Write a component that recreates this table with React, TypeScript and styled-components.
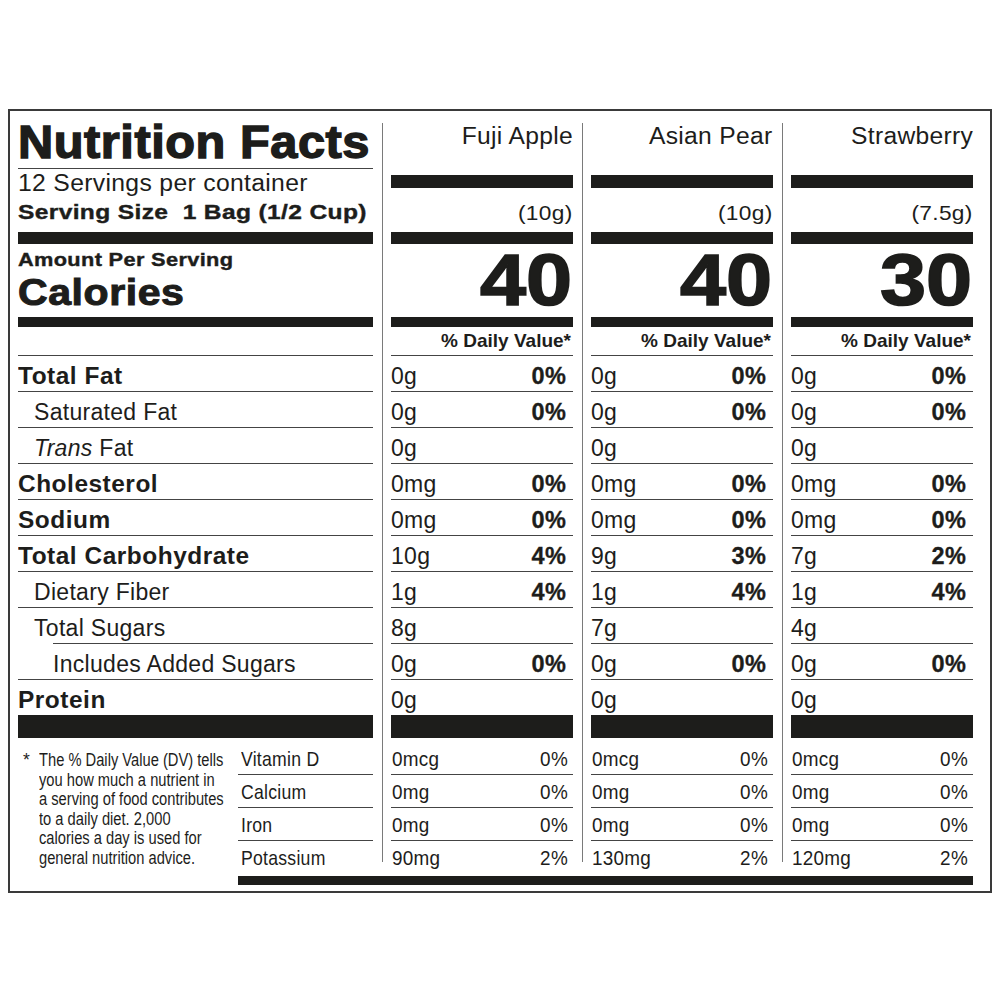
import React from "react";
import styled, { createGlobalStyle } from "styled-components";

const INK = "#1d1d1b";
const LINE = "#444";

const GlobalStyle = createGlobalStyle`
  html, body { margin: 0; padding: 0; background: #fff; }
  body {
    font-family: "Liberation Sans", Arial, Helvetica, sans-serif;
    color: ${INK};
  }
`;

const Page = styled.div`
  padding: 109px 8px 0 8px;
`;

const Label = styled.div`
  width: 984px;
  box-sizing: border-box;
  border: 2px solid #3a3a3a;
  padding: 12px 17px 6px 8px;
`;

const Columns = styled.div`
  display: flex;
  align-items: stretch;
`;

const LeftCol = styled.div`
  width: 355px;
  display: flex;
  flex-direction: column;
`;

const DataCol = styled.div`
  width: 182px;
  display: flex;
  flex-direction: column;
`;

const Divider = styled.div`
  flex: 0 0 1px;
  background: #7a7a7a;
  margin: 0 8px 11px 9px;
`;

const Bar = styled.div<{ $h: number }>`
  height: ${(p) => p.$h}px;
  background: ${INK};
`;

const Rule = styled.div<{ $indent?: number }>`
  height: 1px;
  margin-left: ${(p) => p.$indent ?? 0}px;
  background: ${LINE};
`;

const Stretch = styled.span<{ $sx: number; $right?: boolean }>`
  display: inline-block;
  transform: scaleX(${(p) => p.$sx});
  transform-origin: ${(p) => (p.$right ? "right" : "left")} center;
`;

const Title = styled.h1`
  margin: 0 0 7px;
  font-size: 46px;
  line-height: 38px;
  font-weight: 700;
  letter-spacing: 0.5px;
  -webkit-text-stroke: 1.4px ${INK};
  white-space: nowrap;
`;

const Servings = styled.div`
  font-size: 23px;
  line-height: 29px;
  letter-spacing: 0.3px;
  white-space: nowrap;
`;

const ServingSize = styled.div`
  font-size: 21px;
  line-height: 28px;
  font-weight: 700;
  letter-spacing: 0.3px;
  -webkit-text-stroke: 0.4px ${INK};
  margin-bottom: 6px;
  white-space: pre;
`;

const AmountLabel = styled.div`
  font-size: 19px;
  line-height: 32px;
  font-weight: 700;
  letter-spacing: 0.3px;
  -webkit-text-stroke: 0.4px ${INK};
  white-space: nowrap;
`;

const CaloriesLabel = styled.div`
  font-size: 36px;
  line-height: 34px;
  font-weight: 700;
  letter-spacing: 0.5px;
  -webkit-text-stroke: 1px ${INK};
  margin-bottom: 7px;
`;

const HeaderGap = styled.div`
  height: 29px;
  box-sizing: border-box;
  border-bottom: 1px solid ${LINE};
`;

const DVHeader = styled(HeaderGap)`
  font-size: 19px;
  line-height: 28px;
  font-weight: 700;
  text-align: right;
  padding-right: 2px;
  white-space: nowrap;
`;

const ProductName = styled.div`
  font-size: 23px;
  line-height: 27px;
  letter-spacing: 0.3px;
  text-align: right;
  margin-bottom: 25px;
  white-space: nowrap;
`;

const Weight = styled.div`
  height: 44px;
  box-sizing: border-box;
  padding-top: 13px;
  font-size: 21px;
  line-height: 24px;
  letter-spacing: 0.3px;
  text-align: right;
`;

const BigNumber = styled.div`
  height: 73px;
  font-size: 72px;
  line-height: 73px;
  font-weight: 700;
  text-align: right;
  padding-right: 1px;
`;

const BigDigits = styled(Stretch)`
  -webkit-text-stroke: 1.6px ${INK};
`;

const NutrientRow = styled.div<{ $indent?: number; $bold?: boolean }>`
  height: 35px;
  box-sizing: border-box;
  padding: 5px 7px 0 ${(p) => p.$indent ?? 0}px;
  display: flex;
  justify-content: space-between;
  font-size: ${(p) => (p.$bold ? 23.5 : 23)}px;
  font-weight: ${(p) => (p.$bold ? 700 : 400)};
  letter-spacing: ${(p) => (p.$bold ? 0.5 : 0.3)}px;
  line-height: 30px;
  white-space: nowrap;
`;

const Amount = styled.span`
  font-size: 23px;
  font-weight: 400;
  letter-spacing: 0.3px;
`;

const Percent = styled.span`
  font-size: 23.5px;
  font-weight: 700;
  letter-spacing: 0.6px;
  margin-right: -0.6px;
  -webkit-text-stroke: 0.3px ${INK};
`;

const BottomSection = styled.div`
  display: flex;
`;

const Footnote = styled.div`
  flex: 1 1 auto;
  min-width: 0;
  display: flex;
  margin-top: 13px;
  font-size: 17.5px;
  line-height: 19.6px;
`;

const Asterisk = styled.span`
  flex: 0 0 16px;
  margin-left: 5px;
`;

const FootnoteText = styled.span`
  display: inline-block;
  white-space: nowrap;
  transform: scaleX(0.84);
  transform-origin: left top;
`;

const VitLabels = styled.div`
  flex: 0 0 135px;
  display: flex;
  flex-direction: column;
`;

const VitRow = styled.div<{ $first?: boolean }>`
  height: 32px;
  box-sizing: border-box;
  margin-top: ${(p) => (p.$first ? 4 : 0)}px;
  padding: 2px 5px 0 3px;
  display: flex;
  justify-content: space-between;
  font-size: 21px;
  line-height: 30px;
  letter-spacing: 0.3px;
  white-space: nowrap;
`;

const VitDataRow = styled(VitRow)`
  padding-left: 1px;
`;

const BottomBar = styled.div`
  height: 9px;
  margin: 3px 0 0 220px;
  background: ${INK};
`;

type Nutrient = { label: React.ReactNode; bold?: boolean; indent?: number; ruleIndent?: number };

const NUTRIENTS: Nutrient[] = [
  { label: "Total Fat", bold: true },
  { label: "Saturated Fat", indent: 16 },
  { label: <><i>Trans</i> Fat</>, indent: 16 },
  { label: "Cholesterol", bold: true },
  { label: "Sodium", bold: true },
  { label: "Total Carbohydrate", bold: true },
  { label: "Dietary Fiber", indent: 16 },
  { label: "Total Sugars", indent: 16, ruleIndent: 35 },
  { label: "Includes Added Sugars", indent: 35 },
  { label: "Protein", bold: true },
];

const VITAMINS = ["Vitamin D", "Calcium", "Iron", "Potassium"];

type Product = {
  name: string;
  weight: string;
  calories: string;
  values: [string, string?][];
  vitamins: [string, string][];
};

const PRODUCTS: Product[] = [
  {
    name: "Fuji Apple",
    weight: "(10g)",
    calories: "40",
    values: [["0g", "0%"], ["0g", "0%"], ["0g"], ["0mg", "0%"], ["0mg", "0%"], ["10g", "4%"], ["1g", "4%"], ["8g"], ["0g", "0%"], ["0g"]],
    vitamins: [["0mcg", "0%"], ["0mg", "0%"], ["0mg", "0%"], ["90mg", "2%"]],
  },
  {
    name: "Asian Pear",
    weight: "(10g)",
    calories: "40",
    values: [["0g", "0%"], ["0g", "0%"], ["0g"], ["0mg", "0%"], ["0mg", "0%"], ["9g", "3%"], ["1g", "4%"], ["7g"], ["0g", "0%"], ["0g"]],
    vitamins: [["0mcg", "0%"], ["0mg", "0%"], ["0mg", "0%"], ["130mg", "2%"]],
  },
  {
    name: "Strawberry",
    weight: "(7.5g)",
    calories: "30",
    values: [["0g", "0%"], ["0g", "0%"], ["0g"], ["0mg", "0%"], ["0mg", "0%"], ["7g", "2%"], ["1g", "4%"], ["4g"], ["0g", "0%"], ["0g"]],
    vitamins: [["0mcg", "0%"], ["0mg", "0%"], ["0mg", "0%"], ["120mg", "2%"]],
  },
];

function ProductColumn({ p }: { p: Product }) {
  return (
    <DataCol>
      <ProductName>
        <Stretch $sx={1.07} $right>{p.name}</Stretch>
      </ProductName>
      <Bar $h={13} />
      <Weight>
        <Stretch $sx={1.08} $right>{p.weight}</Stretch>
      </Weight>
      <Bar $h={12} />
      <BigNumber>
        <BigDigits $sx={1.15} $right>{p.calories}</BigDigits>
      </BigNumber>
      <Bar $h={10} />
      <DVHeader>% Daily Value*</DVHeader>
      {p.values.map(([amt, pct], i) => (
        <React.Fragment key={i}>
          <NutrientRow>
            <Amount>{amt}</Amount>
            {pct && <Percent>{pct}</Percent>}
          </NutrientRow>
          {i < p.values.length - 1 && <Rule />}
        </React.Fragment>
      ))}
      <Bar $h={23} />
      {p.vitamins.map(([amt, pct], i) => (
        <React.Fragment key={i}>
          <VitDataRow $first={i === 0}>
            <Stretch $sx={0.9}>{amt}</Stretch>
            <Stretch $sx={0.9} $right>{pct}</Stretch>
          </VitDataRow>
          {i < p.vitamins.length - 1 && <Rule />}
        </React.Fragment>
      ))}
    </DataCol>
  );
}

export default function App() {
  return (
    <Page>
      <GlobalStyle />
      <Label>
        <Columns>
          <LeftCol>
            <Title>
              <Stretch $sx={1.06}>Nutrition Facts</Stretch>
            </Title>
            <Rule />
            <Servings>
              <Stretch $sx={1.075}>12 Servings per container</Stretch>
            </Servings>
            <ServingSize>
              <Stretch $sx={1.17}>{"Serving Size  1 Bag (1/2 Cup)"}</Stretch>
            </ServingSize>
            <Bar $h={12} />
            <AmountLabel>
              <Stretch $sx={1.145}>Amount Per Serving</Stretch>
            </AmountLabel>
            <CaloriesLabel>
              <Stretch $sx={1.14}>Calories</Stretch>
            </CaloriesLabel>
            <Bar $h={10} />
            <HeaderGap />
            {NUTRIENTS.map((n, i) => (
              <React.Fragment key={i}>
                <NutrientRow $bold={n.bold} $indent={n.indent}>
                  {n.bold ? <Stretch $sx={1.04}>{n.label}</Stretch> : <span>{n.label}</span>}
                </NutrientRow>
                {i < NUTRIENTS.length - 1 && <Rule $indent={n.ruleIndent} />}
              </React.Fragment>
            ))}
            <Bar $h={23} />
            <BottomSection>
              <Footnote>
                <Asterisk>*</Asterisk>
                <FootnoteText>
                  The % Daily Value (DV) tells
                  <br />
                  you how much a nutrient in
                  <br />
                  a serving of food contributes
                  <br />
                  to a daily diet. 2,000
                  <br />
                  calories a day is used for
                  <br />
                  general nutrition advice.
                </FootnoteText>
              </Footnote>
              <VitLabels>
                {VITAMINS.map((v, i) => (
                  <React.Fragment key={v}>
                    <VitRow $first={i === 0}>
                      <Stretch $sx={0.84}>{v}</Stretch>
                    </VitRow>
                    {i < VITAMINS.length - 1 && <Rule />}
                  </React.Fragment>
                ))}
              </VitLabels>
            </BottomSection>
          </LeftCol>
          {PRODUCTS.map((p) => (
            <React.Fragment key={p.name}>
              <Divider />
              <ProductColumn p={p} />
            </React.Fragment>
          ))}
        </Columns>
        <BottomBar />
      </Label>
    </Page>
  );
}
